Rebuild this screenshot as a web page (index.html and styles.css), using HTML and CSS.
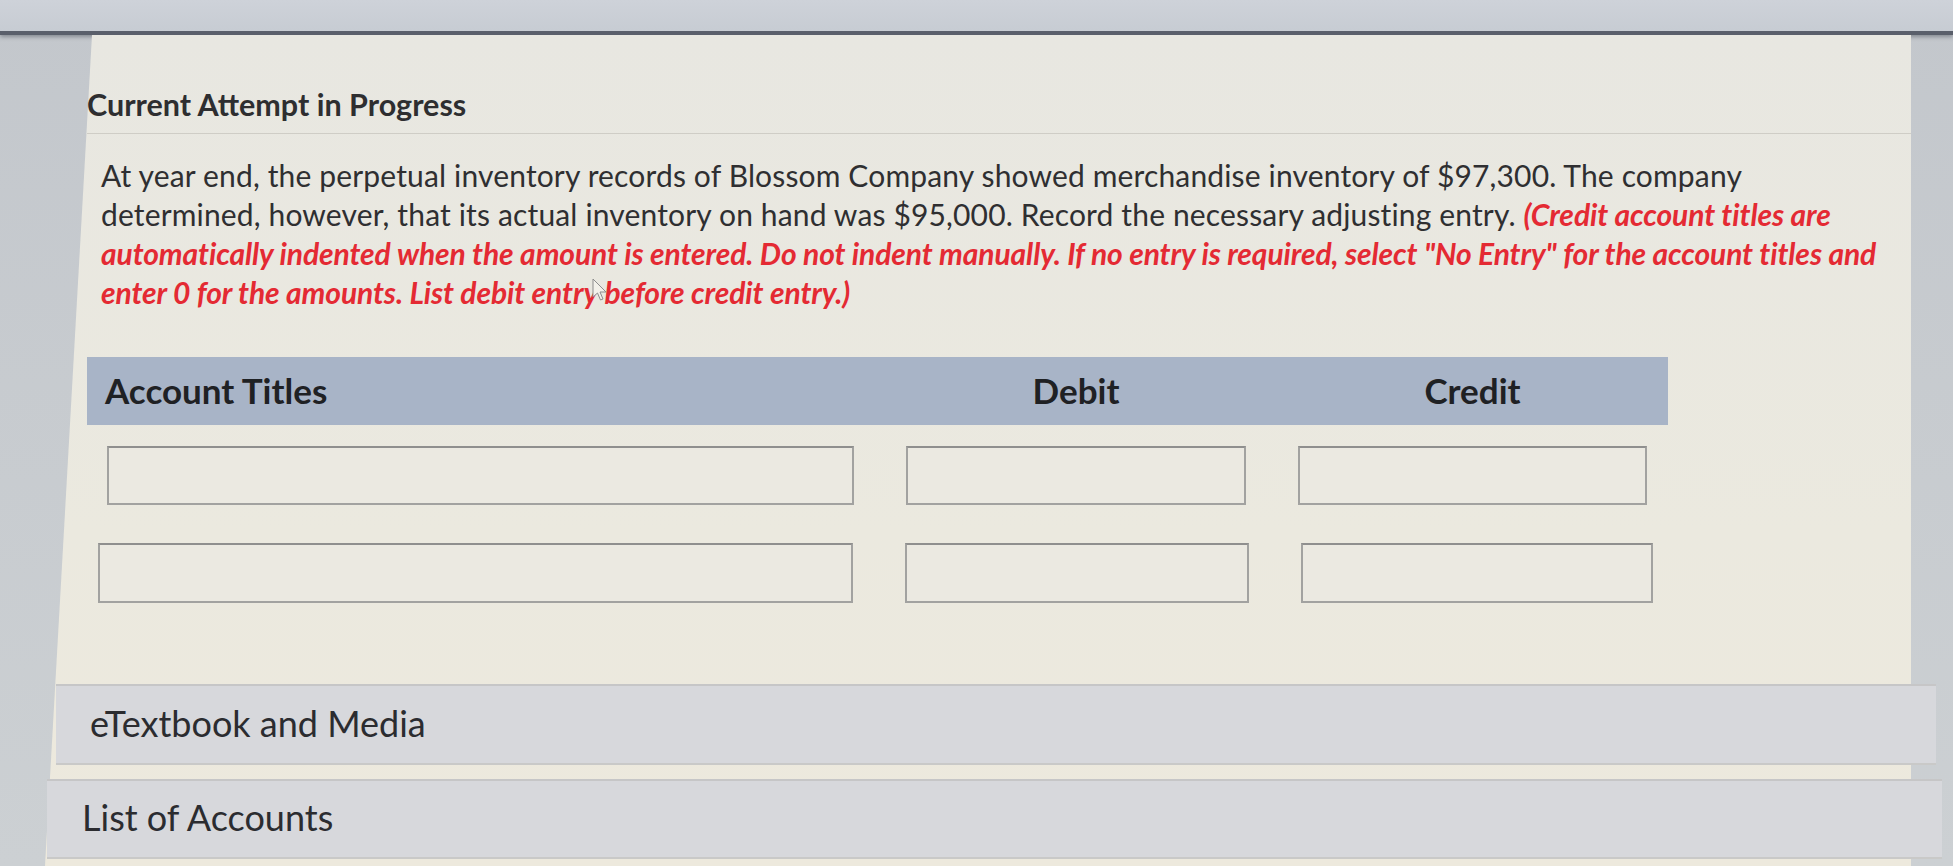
FILE: index.html
```html
<!DOCTYPE html>
<html>
<head>
<meta charset="utf-8">
<link rel="stylesheet" href="styles.css">
</head>
<body>
<div class="topbar"></div>
<div class="page">
  <div class="card">
    <h2 class="title">Current Attempt in Progress</h2>
    <div class="question">
      <p class="text">At year end, the perpetual inventory records of Blossom Company showed merchandise inventory of $97,300. The company<br>determined, however, that its actual inventory on hand was $95,000. Record the necessary adjusting entry. <em class="note">(Credit account titles are<br>automatically indented when the amount is entered. Do not indent manually. If no entry is required, select "No Entry" for the account titles and<br>enter 0 for the amounts. List debit entry<span class="cursor-anchor"><svg class="cursor" width="16" height="24" viewBox="0 0 16 24"><path d="M1 1 L1 19 L5.5 15 L8.5 22 L11 21 L8 14 L14 14 Z" fill="#f3f1ea" stroke="#8d8d8d" stroke-width="1"/></svg></span> before credit entry.)</em></p>
    </div>
    <div class="table">
      <div class="thead">
        <div class="th th-left">Account Titles</div>
        <div class="th">Debit</div>
        <div class="th">Credit</div>
      </div>
      <div class="trow">
        <div class="input"></div>
        <div class="input"></div>
        <div class="input"></div>
      </div>
      <div class="trow trow2">
        <div class="input"></div>
        <div class="input"></div>
        <div class="input"></div>
      </div>
    </div>
    <div class="panel panel1">eTextbook and Media</div>
    <div class="panel panel2">List of Accounts</div>
  </div>
</div>
</body>
</html>
```
FILE: styles.css
```css
html, body {
  margin: 0;
  padding: 0;
}
body {
  width: 1953px;
  height: 866px;
  overflow: hidden;
  background: linear-gradient(#c3c7cc, #ccd0d3);
  font-family: Lato, "Open Sans", sans-serif;
  color: #2a2a2c;
}
.topbar {
  height: 31px;
  background: linear-gradient(#ced2d9, #c7ccd3);
  border-bottom: 4px solid #5a5f6b;
  box-shadow: 0 2px 4px rgba(60, 64, 78, 0.45);
}
.page {
  display: flex;
}
.card {
  position: relative;
  isolation: isolate;
  margin-left: 45px;
  width: 1866px;
  height: 831px;
  padding-top: 52px;
  box-sizing: border-box;
}
.card::before {
  content: "";
  position: absolute;
  inset: 0;
  z-index: -1;
  background: linear-gradient(#e8e7e1, #ebe9df 60%, #ede9dd);
  clip-path: polygon(47px 0, 100% 0, 100% 100%, 0 100%);
}
.title {
  margin: 0 0 0 42px;
  font-size: 30.5px;
  line-height: 34px;
  font-weight: 700;
  color: #2e2e30;
  padding-bottom: 12px;
  border-bottom: 1px solid #cfcdc6;
}
.question {
  margin: 22px 0 0 56px;
}
.text {
  margin: 0;
  font-size: 30px;
  line-height: 39px;
  letter-spacing: 0.15px;
  color: #2f2f31;
  white-space: nowrap;
}
.note {
  color: #e42a33;
  font-weight: 700;
  font-style: italic;
  letter-spacing: -0.1px;
}
.cursor-anchor {
  position: relative;
  display: inline-block;
  width: 0;
  height: 0;
}
.cursor {
  position: absolute;
  left: -6px;
  top: -26px;
}
.table {
  margin: 45px 0 0 42px;
  width: 1581px;
}
.thead, .trow {
  display: grid;
  grid-template-columns: 747px 340px 349px;
  column-gap: 52px;
  padding-left: 20px;
}
.thead {
  height: 68px;
  align-items: center;
  background: #a8b4c7;
}
.th {
  font-weight: 700;
  font-size: 35px;
  text-align: center;
  color: #1f2124;
  padding-bottom: 2px;
}
.th-left {
  text-align: left;
  margin-left: -2px;
}
.trow {
  margin-top: 21px;
}
.trow2 {
  margin-top: 38px;
  padding-left: 11px;
  grid-template-columns: 755px 344px 352px;
}
.input {
  height: 59px;
  box-sizing: border-box;
  border: 2px solid #a2a2a0;
  border-top-color: #8f8f8e;
  background: #ebe9e1;
}
.trow2 .input {
  height: 60px;
}
.panel {
  display: flex;
  align-items: center;
  box-sizing: border-box;
  background: #d7d8dc;
  border-top: 2px solid #c6c6c7;
  border-bottom: 2px solid #c9c9c8;
  font-size: 36px;
  color: #2b2c30;
}
.panel1 {
  margin: 81px -25px 0 11px;
  height: 81px;
  padding-left: 34px;
  padding-bottom: 4px;
}
.panel2 {
  margin: 14px -31px 0 2px;
  height: 80px;
  padding-left: 35px;
  padding-bottom: 4px;
}
```
